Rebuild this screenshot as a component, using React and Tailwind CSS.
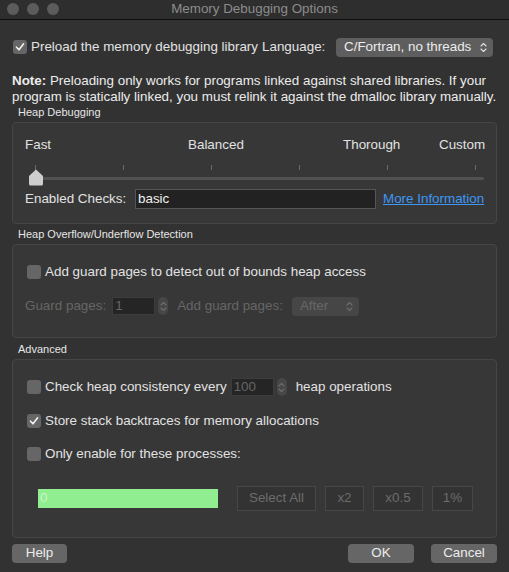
import { useState } from 'react'

const font = { fontFamily: '"Liberation Sans", Arial, sans-serif' }

const Check = ({ checked }) => (
  <span className="flex h-[14px] w-[14px] shrink-0 items-center justify-center rounded-[3px] bg-[#666666]">
    {checked ? (
      <svg width="10" height="10" viewBox="0 0 10 10">
        <path d="M1.5 5.2 L4 7.8 L8.6 1.8" fill="none" stroke="#f2f2f2" strokeWidth="1.6" strokeLinecap="round" strokeLinejoin="round" />
      </svg>
    ) : null}
  </span>
)

const Updown = ({ color = '#e0e0e0' }) => (
  <svg width="7" height="11" viewBox="0 0 7 11">
    <path d="M1 4 L3.5 1.5 L6 4 M1 7 L3.5 9.5 L6 7" fill="none" stroke={color} strokeWidth="1.1" strokeLinecap="round" strokeLinejoin="round" />
  </svg>
)

const Stepper = () => (
  <span className="flex h-[18px] w-[10px] items-center justify-center rounded-full bg-[#474747]">
    <Updown color="#6e6e6e" />
  </span>
)

const GroupLabel = ({ children, className }) => (
  <div className={`h-[14px] pl-[18px] text-[11px] leading-[14px] text-[#e6e6e6] ${className}`}>{children}</div>
)

const Group = ({ children, className }) => (
  <div className={`mx-[12px] rounded-[4px] border border-[#464646] bg-[#373737] ${className}`}>{children}</div>
)

const SmallButton = ({ children, className }) => (
  <span className={`flex h-[25px] items-center justify-center border border-[#474747] bg-[#333333] text-[#6c6c6c] ${className}`}>
    {children}
  </span>
)

const DialogButton = ({ children, className }) => (
  <button type="button" className={`flex h-[19px] items-center justify-center rounded-[4px] bg-[#666666] text-[13.4px] text-[#ececec] ${className}`}>
    {children}
  </button>
)

export default function App() {
  const [checks, setChecks] = useState('basic')

  return (
    <div className="flex h-[572px] w-[509px] flex-col overflow-hidden bg-[#323232] text-[13.4px] text-[#e2e2e2]" style={font}>
      <div className="relative flex h-[20px] shrink-0 items-center justify-center border-b border-[#0e0e0e] bg-[#2e2e2e]">
        <div className="absolute left-[7px] top-[3px] flex gap-[8px]">
          <span className="h-[12px] w-[12px] rounded-full bg-[#5c5c5c]" />
          <span className="h-[12px] w-[12px] rounded-full bg-[#5c5c5c]" />
          <span className="h-[12px] w-[12px] rounded-full bg-[#5c5c5c]" />
        </div>
        <span className="text-[13.4px] text-[#8c8c8c]">Memory Debugging Options</span>
      </div>

      <div className="mt-[17px] flex h-[20px] items-center pl-[13px]">
        <Check checked />
        <span className="ml-[4px]">Preload the memory debugging library</span>
        <span className="ml-[4px]">Language:</span>
        <span className="ml-auto mr-[16px] flex h-[19px] w-[157px] items-center justify-between rounded-[4px] bg-[#5e5e5e] pl-[8px] pr-[6px] text-[#ececec]">
          C/Fortran, no threads
          <Updown />
        </span>
      </div>

      <p className="mt-[16px] px-[12px] leading-[16px] text-[#ececec]">
        <b>Note:</b> Preloading only works for programs linked against shared libraries. If your program is statically linked, you must relink it against the dmalloc library manually.
      </p>

      <GroupLabel className="mt-0">Heap Debugging</GroupLabel>
      <Group className="mt-[3px] h-[102px]">
        <div className="mt-[14px] flex h-[16px] items-center pl-[12px] leading-[16px]">
          <span className="w-[163px]">Fast</span>
          <span className="w-[155px]">Balanced</span>
          <span className="w-[96px]">Thorough</span>
          <span>Custom</span>
        </div>
        <div className="relative mt-[10px] h-[20px]">
          <div className="absolute left-[22px] top-[2px] flex w-[441px] justify-between">
            {[0, 1, 2, 3, 4, 5].map((t) => (
              <span key={t} className="h-[5px] w-px bg-[#6a6a6a]" />
            ))}
          </div>
          <div className="absolute left-[22px] top-[14px] h-[3px] w-[449px] rounded-full bg-[#525252]" />
          <svg className="absolute left-[15px] top-[6px]" width="16" height="17" viewBox="0 0 16 17">
            <path d="M8 0.5 L15 7 L15 15 Q15 16.5 13.5 16.5 L2.5 16.5 Q1 16.5 1 15 L1 7 Z" fill="#cdcdcd" />
          </svg>
        </div>
        <div className="mt-[6px] flex h-[20px] items-center pl-[12px]">
          <span className="w-[110px]">Enabled Checks:</span>
          <input
            value={checks}
            onChange={(e) => setChecks(e.target.value)}
            className="h-[20px] w-[241px] border border-[#555555] bg-[#222222] px-[2px] text-[13.4px] text-[#f0f0f0] outline-none"
            style={font}
          />
          <a href="#" className="ml-[7px] text-[#3d97f5] underline">More Information</a>
        </div>
      </Group>

      <GroupLabel className="mt-[3px]">Heap Overflow/Underflow Detection</GroupLabel>
      <Group className="mt-[3px] h-[94px]">
        <div className="mt-[17px] flex h-[20px] items-center pl-[14px]">
          <Check />
          <span className="ml-[4px]">Add guard pages to detect out of bounds heap access</span>
        </div>
        <div className="mt-[14px] flex h-[20px] items-center pl-[12px] text-[#666666]">
          <span>Guard pages:</span>
          <span className="ml-[6px] flex h-[18px] w-[43px] items-center border border-[#3c3c3c] bg-[#252525] px-[2px]">1</span>
          <span className="ml-[3px]"><Stepper /></span>
          <span className="ml-[9px]">Add guard pages:</span>
          <span className="ml-[9px] flex h-[19px] w-[67px] items-center justify-between rounded-[4px] bg-[#464646] pl-[8px] pr-[6px]">
            After
            <Updown color="#6e6e6e" />
          </span>
        </div>
      </Group>

      <GroupLabel className="mt-[4px]">Advanced</GroupLabel>
      <Group className="mt-[3px] h-[179px]">
        <div className="mt-[17px] flex h-[20px] items-center pl-[14px]">
          <Check />
          <span className="ml-[4px]">Check heap consistency every</span>
          <span className="ml-[4px] flex h-[18px] w-[43px] items-center border border-[#3c3c3c] bg-[#252525] px-[2px] text-[#666666]">100</span>
          <span className="ml-[3px]"><Stepper /></span>
          <span className="ml-[9px]">heap operations</span>
        </div>
        <div className="mt-[14px] flex h-[20px] items-center pl-[14px]">
          <Check checked />
          <span className="ml-[4px]">Store stack backtraces for memory allocations</span>
        </div>
        <div className="mt-[13px] flex h-[20px] items-center pl-[14px]">
          <Check />
          <span className="ml-[4px]">Only enable for these processes:</span>
        </div>
        <div className="mt-[22px] flex h-[25px] items-center pl-[25px]">
          <span className="flex h-[19px] w-[180px] items-center bg-[#90ee90] px-[2px] text-[#c8f5c8]">0</span>
          <SmallButton className="ml-[19px] w-[79px]">Select All</SmallButton>
          <SmallButton className="ml-[9px] w-[39px]">x2</SmallButton>
          <SmallButton className="ml-[9px] w-[50px]">x0.5</SmallButton>
          <SmallButton className="ml-[9px] w-[41px]">1%</SmallButton>
        </div>
      </Group>

      <div className="mt-[6px] flex items-center px-[12px]">
        <DialogButton className="w-[55px]">Help</DialogButton>
        <DialogButton className="ml-auto w-[66px]">OK</DialogButton>
        <DialogButton className="ml-[17px] w-[66px]">Cancel</DialogButton>
      </div>
    </div>
  )
}
